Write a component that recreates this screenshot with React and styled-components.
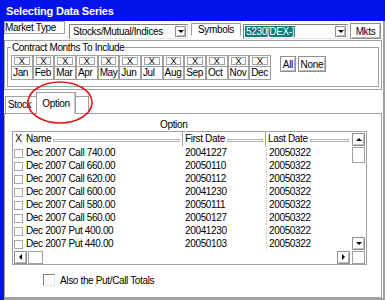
import React from "react";
import styled, { createGlobalStyle, css } from "styled-components";

const GlobalStyle = createGlobalStyle`
  html, body { margin: 0; padding: 0; background: #fff; }
  * { box-sizing: border-box; }
  body {
    font-family: "Liberation Sans", Arial, sans-serif;
    font-size: 10px;
    letter-spacing: -0.35px;
    color: #000;
  }
`;

const raised = css`
  border: 1px solid #909090;
  box-shadow: inset 1px 1px #fff, inset -1px -1px #b8b8b8;
  background: #fff;
`;

const sunken = css`
  border: 1px solid;
  border-color: #808080 #e4e4e4 #e4e4e4 #808080;
  background: #fff;
`;

const Window = styled.div`
  position: relative;
  width: 385px;
  height: 300px;
  background: #0412ec;
  display: flex;
  flex-direction: column;
  overflow: hidden;
`;

const TitleBar = styled.div`
  height: 21px;
  flex: none;
  padding: 1px 0 0 6px;
  color: #fff;
  font-weight: bold;
  font-size: 11px;
  letter-spacing: -0.2px;
  line-height: 20px;
`;

const Body = styled.div`
  flex: 1;
  margin-left: 4px;
  background: #fff;
  border-right: 2px solid #a0a0a0;
  border-bottom: 2px solid #a0a0a0;
  display: flex;
  flex-direction: column;
  min-height: 0;
`;

const TopRow = styled.div`
  height: 19px;
  flex: none;
  display: flex;
  align-items: flex-start;
`;

const LabelBox = styled.div`
  width: ${(p) => p.$w}px;
  height: 13px;
  margin-left: ${(p) => p.$ml || 0}px;
  margin-top: ${(p) => p.$mt || 0}px;
  border: 1px solid #a0a0a0;
  border-bottom-color: ${(p) => (p.$open ? "transparent" : "#a0a0a0")};
  line-height: 11px;
  padding-left: ${(p) => p.$pl ?? 1}px;
  text-align: ${(p) => p.$align || "left"};
  white-space: nowrap;
`;

const Combo = styled.div`
  ${sunken};
  width: ${(p) => p.$w}px;
  height: 15px;
  margin-left: ${(p) => p.$ml}px;
  margin-top: 3px;
  display: flex;
  align-items: center;
  justify-content: space-between;
  padding-left: ${(p) => p.$pl}px;
  white-space: nowrap;
`;

const Selected = styled.span`
  background: #0b7d7d;
  color: #fff;
  padding: 0 1px;
  line-height: 11px;
`;

const DropBtn = styled.div`
  ${raised};
  width: 11px;
  height: 11px;
  margin-right: 1px;
  display: flex;
  align-items: center;
  justify-content: center;
`;

const Arrow = styled.div`
  width: 0;
  height: 0;
  ${(p) =>
    p.$dir === "down" &&
    css`
      border-left: 3px solid transparent;
      border-right: 3px solid transparent;
      border-top: 3px solid #000;
    `}
  ${(p) =>
    p.$dir === "up" &&
    css`
      border-left: 3px solid transparent;
      border-right: 3px solid transparent;
      border-bottom: 3px solid #000;
    `}
  ${(p) =>
    p.$dir === "left" &&
    css`
      border-top: 3px solid transparent;
      border-bottom: 3px solid transparent;
      border-right: 3px solid #000;
    `}
  ${(p) =>
    p.$dir === "right" &&
    css`
      border-top: 3px solid transparent;
      border-bottom: 3px solid transparent;
      border-left: 3px solid #000;
    `}
`;

const Button = styled.div`
  ${raised};
  width: ${(p) => p.$w}px;
  height: ${(p) => p.$h || 16}px;
  margin-left: ${(p) => p.$ml || 0}px;
  margin-top: ${(p) => p.$mt || 0}px;
  display: flex;
  align-items: center;
  justify-content: center;
  flex: none;
`;

const MonthsPanel = styled.div`
  height: 50px;
  flex: none;
  margin-right: 1px;
  border: 1px solid #a0a0a0;
  padding: 6px 2px 2px 2px;
`;

const GroupBox = styled.div`
  position: relative;
  height: 100%;
  border: 1px solid #a0a0a0;
  padding: 7px 3px 0 3px;
  display: flex;
  align-items: flex-start;
`;

const Legend = styled.div`
  position: absolute;
  top: -6px;
  left: 3px;
  background: #fff;
  padding: 0 1px;
  line-height: 11px;
`;

const MonthGrid = styled.div`
  display: grid;
  grid-template-columns: repeat(12, 21.67px);
`;

const MonthCol = styled.div`
  display: flex;
  flex-direction: column;
`;

const CheckCell = styled.div`
  height: 12px;
  border: 1px solid #a0a0a0;
  padding: 1px 2px;
`;

const CheckInner = styled.div`
  height: 100%;
  border: 1px solid #a0a0a0;
  font-size: 9px;
  line-height: 7px;
  text-align: center;
  letter-spacing: 0;
`;

const MonthLabel = styled.div`
  height: 13px;
  border: 1px solid #a0a0a0;
  border-top: none;
  padding-left: 1px;
  line-height: 12px;
`;

const TabRow = styled.div`
  height: 23px;
  flex: none;
  display: flex;
  align-items: flex-end;
  padding-left: 1px;
`;

const Tab = styled.div`
  position: relative;
  width: ${(p) => p.$w}px;
  height: ${(p) => (p.$active ? 22 : 17)}px;
  margin-left: ${(p) => p.$ml || 0}px;
  margin-bottom: ${(p) => (p.$active ? -1 : 0)}px;
  z-index: ${(p) => (p.$active ? 1 : 0)};
  background: #fff;
  border: 1px solid #a0a0a0;
  border-bottom: none;
  ${(p) => p.$noLeft && "border-left: none;"}
  box-shadow: ${(p) => (p.$active ? "inset -1px 0 #c8c8c8, inset 1px 1px #fff" : "none")};
  padding: ${(p) => (p.$active ? "5px 0 0 0" : "2px 0 0 2px")};
  text-align: ${(p) => (p.$active ? "center" : "left")};
  line-height: 11px;
  overflow: hidden;
  white-space: nowrap;
`;

const TabPanel = styled.div`
  flex: 1;
  margin-right: 1px;
  border: 1px solid #a0a0a0;
  display: flex;
  flex-direction: column;
  min-height: 0;
`;

const Caption = styled.div`
  height: 12px;
  margin-top: 5px;
  padding-left: 155px;
  line-height: 12px;
`;

const ListBox = styled.div`
  width: 355px;
  height: 134px;
  margin-left: 7px;
  border: 1px solid #a0a0a0;
  display: grid;
  grid-template-columns: 338px 15px;
  grid-template-rows: 118px 14px;
`;

const cols = css`
  display: grid;
  grid-template-columns: 11px 159px 83px 85px;
`;

const Main = styled.div`
  display: flex;
  flex-direction: column;
  overflow: hidden;
`;

const HeaderRow = styled.div`
  ${cols};
  height: 14px;
  flex: none;
`;

const HeaderCell = styled.div`
  display: flex;
  align-items: center;
  padding-left: ${(p) => (p.$center ? 0 : 2)}px;
  justify-content: ${(p) => (p.$center ? "center" : "flex-start")};
  border-right: ${(p) => (p.$sep ? "1px solid #a0a0a0" : "none")};
  white-space: nowrap;
  line-height: 12px;
`;

const HeaderLine = styled.div`
  flex: 1;
  height: 3px;
  margin: 2px 2px 0 2px;
  border: 1px solid #b4b4b4;
`;

const Row = styled.div`
  ${cols};
  height: 13px;
  flex: none;
`;

const RowCell = styled.div`
  padding-left: 2px;
  line-height: 13px;
  white-space: nowrap;
  ${(p) => p.$dotted && "border-left: 1px dotted #c0c0c0;"}
`;

const RowCheck = styled.div`
  width: 9px;
  height: 9px;
  margin: 3px 0 0 1px;
  border: 1px solid #a8a8a8;
`;

const VScroll = styled.div`
  display: flex;
  flex-direction: column;
  padding: 1px 1px 0 1px;
`;

const ScrollBtn = styled.div`
  ${raised};
  width: 13px;
  height: 13px;
  flex: none;
  display: flex;
  align-items: center;
  justify-content: center;
`;

const Thumb = styled.div`
  width: ${(p) => p.$w}px;
  height: ${(p) => p.$h}px;
  margin: ${(p) => p.$m};
  border: 1px solid #a0a0a0;
  flex: none;
`;

const Spacer = styled.div`
  flex: 1;
`;

const HScroll = styled.div`
  display: flex;
  align-items: center;
  padding: 0 1px 0 1px;
`;

const Corner = styled.div`
  width: 13px;
  height: 13px;
  margin: 1px 0 0 1px;
  border: 1px solid #a0a0a0;
`;

const FooterRow = styled.div`
  display: flex;
  align-items: center;
  margin-top: 9px;
  padding-left: 38px;
`;

const BigCheck = styled.div`
  ${sunken};
  width: 12px;
  height: 12px;
  margin-right: 5px;
`;

const Annotation = styled.svg`
  position: absolute;
  left: 26px;
  top: 80px;
  pointer-events: none;
`;

const months = ["Jan", "Feb", "Mar", "Apr", "May", "Jun", "Jul", "Aug", "Sep", "Oct", "Nov", "Dec"];

const rows = [
  ["Dec 2007 Call 740.00", "20041227", "20050322"],
  ["Dec 2007 Call 660.00", "20050110", "20050322"],
  ["Dec 2007 Call 620.00", "20050112", "20050322"],
  ["Dec 2007 Call 600.00", "20041230", "20050322"],
  ["Dec 2007 Call 580.00", "20050111", "20050322"],
  ["Dec 2007 Call 560.00", "20050127", "20050322"],
  ["Dec 2007 Put 400.00", "20041230", "20050322"],
  ["Dec 2007 Put 440.00", "20050103", "20050322"],
];

export default function App() {
  return (
    <>
      <GlobalStyle />
      <Window>
        <TitleBar>Selecting Data Series</TitleBar>
        <Body>
          <TopRow>
            <LabelBox $w={61} $pl={0}>Market Type</LabelBox>
            <Combo $w={119} $ml={4} $pl={3}>
              Stocks/Mutual/Indices
              <DropBtn>
                <Arrow $dir="down" />
              </DropBtn>
            </Combo>
            <LabelBox $w={50} $ml={3} $mt={2} $align="center" $pl={0} $open>
              Symbols
            </LabelBox>
            <Combo $w={105} $ml={2} $pl={1}>
              <Selected>5230[DEX-]</Selected>
              <DropBtn>
                <Arrow $dir="down" />
              </DropBtn>
            </Combo>
            <Button $w={31} $ml={2} $mt={2}>Mkts</Button>
          </TopRow>

          <MonthsPanel>
            <GroupBox>
              <Legend>Contract Months To Include</Legend>
              <MonthGrid>
                {months.map((m) => (
                  <MonthCol key={m}>
                    <CheckCell>
                      <CheckInner>X</CheckInner>
                    </CheckCell>
                    <MonthLabel>{m}</MonthLabel>
                  </MonthCol>
                ))}
              </MonthGrid>
              <Button $w={16} $ml={9} $mt={1}>All</Button>
              <Button $w={28} $ml={2} $mt={1}>None</Button>
            </GroupBox>
          </MonthsPanel>

          <TabRow>
            <Tab $w={33}>Stock</Tab>
            <Tab $w={40} $ml={-2} $active>Option</Tab>
            <Tab $w={13} $noLeft />
          </TabRow>

          <TabPanel>
            <Caption>Option</Caption>
            <ListBox>
              <Main>
                <HeaderRow>
                  <HeaderCell $center>X</HeaderCell>
                  <HeaderCell $sep>
                    Name
                    <HeaderLine />
                  </HeaderCell>
                  <HeaderCell $sep>
                    First Date
                    <HeaderLine />
                  </HeaderCell>
                  <HeaderCell>
                    Last Date
                    <HeaderLine />
                  </HeaderCell>
                </HeaderRow>
                {rows.map((r) => (
                  <Row key={r[0]}>
                    <RowCheck />
                    <RowCell>{r[0]}</RowCell>
                    <RowCell>{r[1]}</RowCell>
                    <RowCell $dotted>{r[2]}</RowCell>
                  </Row>
                ))}
              </Main>
              <VScroll>
                <ScrollBtn>
                  <Arrow $dir="up" />
                </ScrollBtn>
                <Thumb $w={13} $h={16} $m="1px 0 0 0" />
                <Spacer />
                <ScrollBtn>
                  <Arrow $dir="down" />
                </ScrollBtn>
              </VScroll>
              <HScroll>
                <ScrollBtn>
                  <Arrow $dir="left" />
                </ScrollBtn>
                <Thumb $w={15} $h={13} $m="0 0 0 1px" />
                <Spacer />
                <ScrollBtn>
                  <Arrow $dir="right" />
                </ScrollBtn>
              </HScroll>
              <Corner />
            </ListBox>
            <FooterRow>
              <BigCheck />
              Also the Put/Call Totals
            </FooterRow>
          </TabPanel>
        </Body>
        <Annotation width="68" height="46" viewBox="0 0 68 46">
          <ellipse cx="34" cy="22.5" rx="32" ry="20.5" fill="none" stroke="#e01818" strokeWidth="1.6" />
        </Annotation>
      </Window>
    </>
  );
}
